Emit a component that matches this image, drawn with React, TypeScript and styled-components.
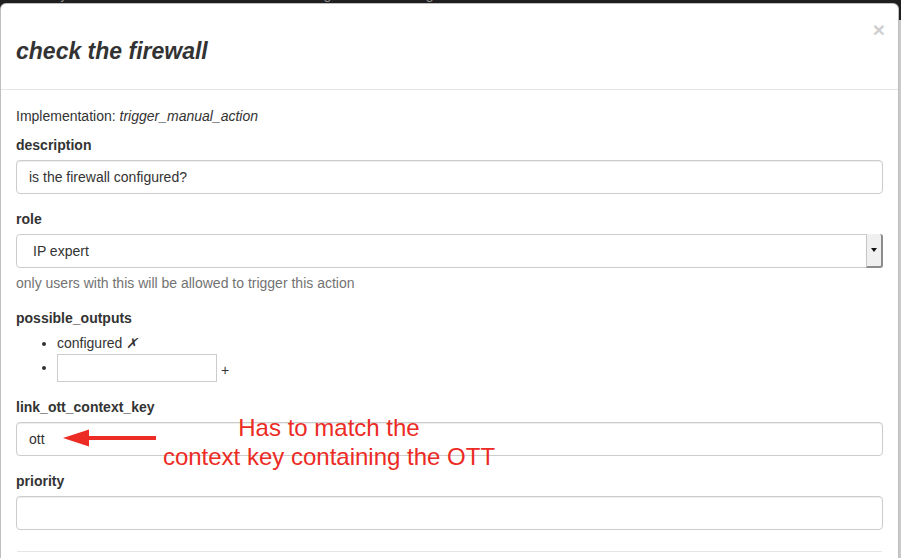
import React from "react";
import styled, { createGlobalStyle } from "styled-components";

const Global = createGlobalStyle`
  html, body { margin: 0; padding: 0; }
  body {
    width: 901px; height: 558px; overflow: hidden;
    font-family: "Liberation Sans", Arial, sans-serif;
    font-size: 14px; color: #333; background: #c8c8c8;
  }
  * { box-sizing: border-box; }
`;

const Page = styled.div`
  position: relative;
  width: 901px;
  height: 558px;
  overflow: hidden;
  background: #c9c9c9;
`;

const Navbar = styled.div`
  height: 20px;
  background: #1f1f1f;
  display: flex;
  padding-left: 40px;
  overflow: hidden;
`;

const NavItem = styled.span<{ $w: number }>`
  width: ${(p) => p.$w}px;
  margin-top: -13px;
  line-height: 14px;
  font-size: 14px;
  color: #8a8a8a;
  white-space: nowrap;
`;

const Modal = styled.div`
  position: absolute;
  top: 3px;
  left: 0;
  width: 899px;
  height: 620px;
  background: #fff;
  border: 1px solid rgba(0, 0, 0, 0.25);
  border-radius: 6px;
`;

const Header = styled.div`
  position: relative;
  padding: 35px 15px 26px;
  border-bottom: 1px solid #e5e5e5;
`;

const Title = styled.h4`
  margin: 0;
  font-size: 23px;
  line-height: 24px;
  font-weight: bold;
  font-style: italic;
  color: #333;
`;

const Close = styled.span`
  position: absolute;
  top: 15px;
  right: 13px;
  font-size: 21px;
  line-height: 21px;
  font-weight: bold;
  color: #cfcfcf;
`;

const Body = styled.div`
  position: relative;
  padding: 16px 15px 21px 15px;
`;

const Impl = styled.p`
  margin: 0 0 9px;
  line-height: 20px;
`;

const Group = styled.div<{ $last?: boolean }>`
  margin-bottom: ${(p) => (p.$last ? 0 : 15)}px;
`;

const Label = styled.label`
  display: block;
  font-weight: bold;
  line-height: 20px;
  margin-bottom: 5px;
`;

const Input = styled.div`
  height: 34px;
  border: 1px solid #ccc;
  border-radius: 4px;
  box-shadow: inset 0 1px 1px rgba(0, 0, 0, 0.075);
  padding: 0 12px;
  display: flex;
  align-items: center;
  font-size: 14px;
  color: #333;
`;

const SelectBox = styled.div`
  height: 34px;
  border: 1px solid #ccc;
  border-radius: 4px;
  display: flex;
  align-items: stretch;
`;

const SelectText = styled.div`
  flex: 1;
  display: flex;
  align-items: center;
  padding-left: 16px;
`;

const SelectButton = styled.div`
  width: 17px;
  background: #f0f0f0;
  border-left: 1px solid #c4c4c4;
  border-right: 2px solid #8c8c8c;
  border-bottom: 2px solid #8c8c8c;
  border-radius: 0 3px 3px 0;
  display: flex;
  align-items: center;
  justify-content: center;
  margin: -1px -1px -1px 0;
`;

const Caret = styled.span`
  width: 0;
  height: 0;
  border-left: 3px solid transparent;
  border-right: 3px solid transparent;
  border-top: 4px solid #111;
`;

const Help = styled.div`
  margin-top: 5px;
  line-height: 20px;
  color: #737373;
`;

const List = styled.ul`
  margin: 0;
  padding-left: 41px;
  list-style: disc;
`;

const Item = styled.li`
  line-height: 20px;
`;

const ItemRow = styled.li`
  line-height: 20px;
  padding-top: 1px;
`;

const ItemControls = styled.div`
  display: inline-flex;
  align-items: center;
  gap: 4px;
  vertical-align: middle;
`;

const SmallInput = styled.div`
  width: 160px;
  height: 28px;
  border: 1px solid #ccc;
  background: #fff;
`;

const Plus = styled.span`
  color: #333;
  padding-top: 3px;
`;

const Cross = styled.span`
  font-style: italic;
`;

const Divider = styled.div`
  margin: 0 16px;
  border-top: 1px solid #e5e5e5;
`;

const Annotation = styled.div`
  position: absolute;
  left: 130px;
  top: 323px;
  width: 396px;
  text-align: center;
  color: #ec2b24;
  font-size: 24px;
  line-height: 29px;
`;

const Arrow = styled.svg`
  position: absolute;
  left: 60px;
  top: 336px;
`;

export default function App() {
  return (
    <Page>
      <Global />
      <Navbar>
        <NavItem $w={115}>Playbooks</NavItem>
        <NavItem $w={100}>Builds</NavItem>
        <NavItem $w={135}>Provisioning</NavItem>
        <NavItem $w={90}>Settings</NavItem>
        <NavItem $w={140}>Orchestration</NavItem>
      </Navbar>
      <Modal>
        <Header>
          <Title>check the firewall</Title>
          <Close>×</Close>
        </Header>
        <Body>
          <Impl>
            Implementation: <i>trigger_manual_action</i>
          </Impl>
          <Group>
            <Label>description</Label>
            <Input>is the firewall configured?</Input>
          </Group>
          <Group>
            <Label>role</Label>
            <SelectBox>
              <SelectText>IP expert</SelectText>
              <SelectButton>
                <Caret />
              </SelectButton>
            </SelectBox>
            <Help>only users with this will be allowed to trigger this action</Help>
          </Group>
          <Group>
            <Label>possible_outputs</Label>
            <List>
              <Item>
                configured <Cross>✗</Cross>
              </Item>
              <ItemRow>
                <ItemControls>
                  <SmallInput />
                  <Plus>+</Plus>
                </ItemControls>
              </ItemRow>
            </List>
          </Group>
          <Group>
            <Label>link_ott_context_key</Label>
            <Input>ott</Input>
          </Group>
          <Group $last>
            <Label>priority</Label>
            <Input />
          </Group>
          <Arrow width="100" height="24" viewBox="0 0 100 24">
            <path d="M2 12 L28 3.5 L28 10 L95 10 L95 14 L28 14 L28 20.5 Z" fill="#ec2b24" />
          </Arrow>
          <Annotation>
            Has to match the
            <br />
            context key containing the OTT
          </Annotation>
        </Body>
        <Divider />
      </Modal>
    </Page>
  );
}
